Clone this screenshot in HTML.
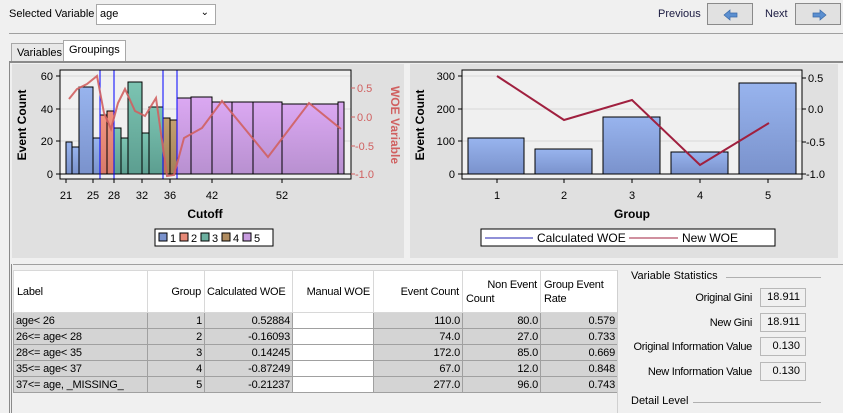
<!DOCTYPE html>
<html><head><meta charset="utf-8"><style>
*{margin:0;padding:0;box-sizing:border-box}
body{width:843px;height:413px;background:#f0f0f0;font-family:"Liberation Sans",sans-serif;font-size:11px;color:#000;position:relative;overflow:hidden}
.a{position:absolute}
.btn{position:absolute;border:1px solid #8a8a8a;background:#e1e1e1;height:22px;width:46px}
table{border-collapse:collapse;font-size:11px;letter-spacing:-0.2px;table-layout:fixed}
td{border:1px solid #a0a0a0;padding:0 2px;height:16px;white-space:nowrap;overflow:hidden}
th{font-weight:normal;background:#fff;border:1px solid #d8d8d8;height:42px;padding:0 3px;line-height:14px;white-space:nowrap}
.g td{background:#d4d4d4}
.box{position:absolute;left:760px;width:46px;height:19px;border:1px solid #b8b8b8;background:#f0f0f0;text-align:right;padding-right:5px;line-height:17px}
.lbl{position:absolute;right:91px;text-align:right;letter-spacing:-0.3px}
</style></head><body>
<div class="a" style="left:9px;top:8px">Selected Variable</div>
<div class="a" style="left:96px;top:4px;width:120px;height:21px;border:1px solid #a8a8a8;background:#fff;padding:3px 3px">age<span style="position:absolute;right:6px;top:2px;font-size:10px">&#8964;</span></div>
<div class="a" style="left:658px;top:8px;color:#1a1a40">Previous</div>
<div class="btn" style="left:707px;top:3px"><svg width="46" height="22"><path d="M16 11 L22 6 L22 9 L29 9 L29 13 L22 13 L22 16 Z" fill="#5b8fd0" stroke="#3a6aa8" stroke-width=".7"/></svg></div>
<div class="a" style="left:765px;top:8px;color:#1a1a40">Next</div>
<div class="btn" style="left:795px;top:3px"><svg width="46" height="22"><path d="M30 11 L24 6 L24 9 L17 9 L17 13 L24 13 L24 16 Z" fill="#5b8fd0" stroke="#3a6aa8" stroke-width=".7"/></svg></div>
<div class="a" style="left:9px;top:33px;width:834px;border-top:1px solid #a0a0a0"></div>
<div class="a" style="left:11px;top:43px;width:53px;height:18px;border:1px solid #a8a8a8;border-bottom:none;background:#e8e8e8;padding:3px 0 0 5px">Variables</div>
<div class="a" style="left:63px;top:40px;width:63px;height:22px;border:1px solid #a8a8a8;border-bottom:none;background:#fff;padding:3px 0 0 5px">Groupings</div>
<div class="a" style="left:9px;top:61px;width:834px;height:205px;border-top:2px solid #8a8a8a;border-left:1px solid #8a8a8a;background:#f0f0f0"></div>
<div class="a" style="left:12px;top:64px;width:392px;height:194px;background:#e0e0e0"></div>
<div class="a" style="left:410px;top:64px;width:428px;height:194px;background:#e0e0e0"></div>
<svg class="a" style="left:0;top:0" width="843" height="260" font-family="Liberation Sans,sans-serif" font-size="11">
<defs>
<linearGradient id="g1" x1="0" y1="0" x2="0" y2="1"><stop offset="0" stop-color="#98b4ee"/><stop offset="1" stop-color="#7a92cc"/></linearGradient>
<linearGradient id="g2" x1="0" y1="0" x2="0" y2="1"><stop offset="0" stop-color="#f29580"/><stop offset="1" stop-color="#d87a6a"/></linearGradient>
<linearGradient id="g3" x1="0" y1="0" x2="0" y2="1"><stop offset="0" stop-color="#7cc4b2"/><stop offset="1" stop-color="#5c9e90"/></linearGradient>
<linearGradient id="g4" x1="0" y1="0" x2="0" y2="1"><stop offset="0" stop-color="#c4a070"/><stop offset="1" stop-color="#a08058"/></linearGradient>
<linearGradient id="g5" x1="0" y1="0" x2="0" y2="1"><stop offset="0" stop-color="#dba8f2"/><stop offset="1" stop-color="#b890d0"/></linearGradient>
</defs>
<rect x="60" y="70" width="291" height="109" fill="#f0f0f0"/>
<g stroke="#d8d8d8"><line x1="60" y1="76" x2="351" y2="76"/><line x1="60" y1="109" x2="351" y2="109"/><line x1="60" y1="141" x2="351" y2="141"/></g>
<g stroke="#000" stroke-width="1">
<rect x="66" y="142" width="6" height="32" fill="url(#g1)"/><rect x="72" y="147" width="7" height="27" fill="url(#g1)"/><rect x="79" y="87" width="14" height="87" fill="url(#g1)"/><rect x="93" y="138" width="7" height="36" fill="url(#g1)"/>
<rect x="100" y="115" width="7" height="59" fill="url(#g2)"/><rect x="107" y="111" width="7" height="63" fill="url(#g2)"/>
<rect x="114" y="128" width="7" height="46" fill="url(#g3)"/><rect x="121" y="138" width="7" height="36" fill="url(#g3)"/><rect x="128" y="82" width="14" height="92" fill="url(#g3)"/><rect x="142" y="133" width="7" height="41" fill="url(#g3)"/><rect x="149" y="107" width="14" height="67" fill="url(#g3)"/>
<rect x="163" y="118" width="7" height="56" fill="url(#g4)"/><rect x="170" y="120" width="7" height="54" fill="url(#g4)"/>
<rect x="177" y="98" width="14" height="76" fill="url(#g5)"/><rect x="191" y="97" width="21" height="77" fill="url(#g5)"/><rect x="212" y="102" width="20" height="72" fill="url(#g5)"/><rect x="232" y="102" width="21" height="72" fill="url(#g5)"/><rect x="253" y="102" width="29" height="72" fill="url(#g5)"/><rect x="282" y="104" width="56" height="70" fill="url(#g5)"/><rect x="338" y="102" width="6" height="72" fill="url(#g5)"/>
</g>
<line x1="60" y1="174" x2="351" y2="174" stroke="#000"/>
<g stroke="#0000ff"><line x1="100" y1="70" x2="100" y2="179"/><line x1="114" y1="70" x2="114" y2="179"/><line x1="163" y1="70" x2="163" y2="179"/><line x1="177" y1="70" x2="177" y2="179"/></g>
<polyline points="69,99 77,89 87,84 97,76 104,113 111,129 118,103 125,89 135,111 145,116 156,98 167,176 174,175 184,138 202,128 222,101 268,157 309,103 341,129" fill="none" stroke="#d06060" stroke-width="2" opacity=".9"/>
<rect x="60" y="70" width="291" height="109" fill="none" stroke="#000"/>
<g stroke="#000"><line x1="56" y1="76" x2="60" y2="76"/><line x1="56" y1="109" x2="60" y2="109"/><line x1="56" y1="141" x2="60" y2="141"/><line x1="56" y1="174" x2="60" y2="174"/>
<line x1="66" y1="179" x2="66" y2="183"/><line x1="93" y1="179" x2="93" y2="183"/><line x1="114" y1="179" x2="114" y2="183"/><line x1="142" y1="179" x2="142" y2="183"/><line x1="170" y1="179" x2="170" y2="183"/><line x1="212" y1="179" x2="212" y2="183"/><line x1="282" y1="179" x2="282" y2="183"/></g>
<g text-anchor="end"><text x="53" y="80">60</text><text x="53" y="113">40</text><text x="53" y="145">20</text><text x="53" y="178">0</text></g>
<g stroke="#d06060"><line x1="351" y1="88" x2="355" y2="88"/><line x1="351" y1="117" x2="355" y2="117"/><line x1="351" y1="146" x2="355" y2="146"/><line x1="351" y1="174" x2="355" y2="174"/></g>
<g fill="#d06060"><text x="357" y="92">0.5</text><text x="357" y="121">0.0</text><text x="355" y="150">-0.5</text><text x="355" y="178">-1.0</text>
<text transform="translate(391,125) rotate(90)" text-anchor="middle" font-weight="bold" font-size="12">WOE Variable</text></g>
<text transform="translate(26,125) rotate(-90)" text-anchor="middle" font-weight="bold" font-size="12">Event Count</text>
<g text-anchor="middle"><text x="66" y="199">21</text><text x="93" y="199">25</text><text x="114" y="199">28</text><text x="142" y="199">32</text><text x="170" y="199">36</text><text x="212" y="199">42</text><text x="282" y="199">52</text></g>
<text x="205" y="218" text-anchor="middle" font-weight="bold" font-size="12">Cutoff</text>
<rect x="155" y="229" width="118" height="17" fill="#fff" stroke="#000"/>
<g stroke="#000"><rect x="159" y="233" width="8" height="8" fill="#7a92cc"/><rect x="180" y="233" width="8" height="8" fill="#e88a78"/><rect x="201" y="233" width="8" height="8" fill="#6cb0a0"/><rect x="222" y="233" width="8" height="8" fill="#b08c60"/><rect x="243" y="233" width="8" height="8" fill="#c89ce0"/></g>
<text x="170" y="242">1</text><text x="191" y="242">2</text><text x="212" y="242">3</text><text x="233" y="242">4</text><text x="254" y="242">5</text>

<rect x="462" y="70" width="340" height="109" fill="#f0f0f0"/>
<g stroke="#d8d8d8"><line x1="462" y1="76" x2="802" y2="76"/><line x1="462" y1="109" x2="802" y2="109"/><line x1="462" y1="141" x2="802" y2="141"/></g>
<g stroke="#000"><rect x="468" y="138" width="56" height="36" fill="url(#g1)"/><rect x="535" y="149" width="57" height="25" fill="url(#g1)"/><rect x="603" y="117" width="57" height="57" fill="url(#g1)"/><rect x="671" y="152" width="57" height="22" fill="url(#g1)"/><rect x="739" y="83" width="57" height="91" fill="url(#g1)"/></g>
<line x1="462" y1="174" x2="802" y2="174" stroke="#000"/>
<polyline points="497,76 564,120 632,100 700,165 769,123" fill="none" stroke="#a0203f" stroke-width="2"/>
<rect x="462" y="70" width="340" height="109" fill="none" stroke="#000"/>
<g stroke="#000"><line x1="458" y1="76" x2="462" y2="76"/><line x1="458" y1="109" x2="462" y2="109"/><line x1="458" y1="141" x2="462" y2="141"/><line x1="458" y1="174" x2="462" y2="174"/>
<line x1="802" y1="78" x2="806" y2="78"/><line x1="802" y1="109" x2="806" y2="109"/><line x1="802" y1="142" x2="806" y2="142"/><line x1="802" y1="174" x2="806" y2="174"/>
<line x1="497" y1="179" x2="497" y2="183"/><line x1="564" y1="179" x2="564" y2="183"/><line x1="632" y1="179" x2="632" y2="183"/><line x1="700" y1="179" x2="700" y2="183"/><line x1="768" y1="179" x2="768" y2="183"/></g>
<g text-anchor="end"><text x="455" y="80">300</text><text x="455" y="113">200</text><text x="455" y="145">100</text><text x="455" y="178">0</text></g>
<text x="808" y="82">0.5</text><text x="808" y="113">0.0</text><text x="806" y="146">-0.5</text><text x="806" y="178">-1.0</text>
<text transform="translate(424,125) rotate(-90)" text-anchor="middle" font-weight="bold" font-size="12">Event Count</text>
<g text-anchor="middle"><text x="497" y="199">1</text><text x="564" y="199">2</text><text x="632" y="199">3</text><text x="700" y="199">4</text><text x="768" y="199">5</text></g>
<text x="632" y="218" text-anchor="middle" font-weight="bold" font-size="12">Group</text>
<rect x="481" y="229" width="294" height="17" fill="#fff" stroke="#000"/>
<line x1="485" y1="238" x2="533" y2="238" stroke="#2020b0"/><text x="537" y="242" font-size="12">Calculated WOE</text>
<line x1="629" y1="238" x2="678" y2="238" stroke="#a0203f"/><text x="682" y="242" font-size="12">New WOE</text>
</svg>
<div class="a" style="left:9px;top:264px;width:3px;height:149px;border-left:1px solid #8a8a8a;border-right:1px solid #8a8a8a"></div>
<div class="a" style="left:13px;top:264px;width:830px;border-top:1px solid #a0a0a0"></div>
<table class="a" style="left:13px;top:270px;width:604px">
<colgroup><col style="width:134px"><col style="width:57px"><col style="width:88px"><col style="width:81px"><col style="width:89px"><col style="width:78px"><col style="width:77px"></colgroup>
<tr><th style="text-align:left">Label</th><th style="text-align:right">Group</th><th style="text-align:left;padding-left:2px">Calculated WOE</th><th style="text-align:right">Manual WOE</th><th style="text-align:right">Event Count</th><th style="text-align:right">Non Event<br><span style="float:left">Count</span></th><th style="text-align:left">Group Event<br>Rate</th></tr>
<tr class="g"><td>age&lt; 26</td><td align="right">1</td><td align="right">0.52884</td><td style="background:#fff"></td><td align="right">110.0</td><td align="right">80.0</td><td align="right">0.579</td></tr>
<tr class="g"><td>26&lt;= age&lt; 28</td><td align="right">2</td><td align="right">-0.16093</td><td style="background:#fff"></td><td align="right">74.0</td><td align="right">27.0</td><td align="right">0.733</td></tr>
<tr class="g"><td>28&lt;= age&lt; 35</td><td align="right">3</td><td align="right">0.14245</td><td style="background:#fff"></td><td align="right">172.0</td><td align="right">85.0</td><td align="right">0.669</td></tr>
<tr class="g"><td>35&lt;= age&lt; 37</td><td align="right">4</td><td align="right">-0.87249</td><td style="background:#fff"></td><td align="right">67.0</td><td align="right">12.0</td><td align="right">0.848</td></tr>
<tr class="g"><td>37&lt;= age, _MISSING_</td><td align="right">5</td><td align="right">-0.21237</td><td style="background:#fff"></td><td align="right">277.0</td><td align="right">96.0</td><td align="right">0.743</td></tr>
</table>
<div class="a" style="left:617px;top:270px;height:143px;border-left:1px solid #d0d0d0"></div>
<div class="a" style="left:631px;top:270px">Variable Statistics</div>
<div class="a" style="left:726px;top:277px;width:95px;border-top:1px solid #b0b0b0"></div>
<div class="lbl" style="top:292px">Original Gini</div><div class="box" style="top:288px">18.911</div>
<div class="lbl" style="top:317px">New Gini</div><div class="box" style="top:313px">18.911</div>
<div class="lbl" style="top:341px">Original Information Value</div><div class="box" style="top:337px">0.130</div>
<div class="lbl" style="top:366px">New Information Value</div><div class="box" style="top:362px">0.130</div>
<div class="a" style="left:631px;top:395px">Detail Level</div>
<div class="a" style="left:693px;top:402px;width:128px;border-top:1px solid #b0b0b0"></div>
</body></html>
